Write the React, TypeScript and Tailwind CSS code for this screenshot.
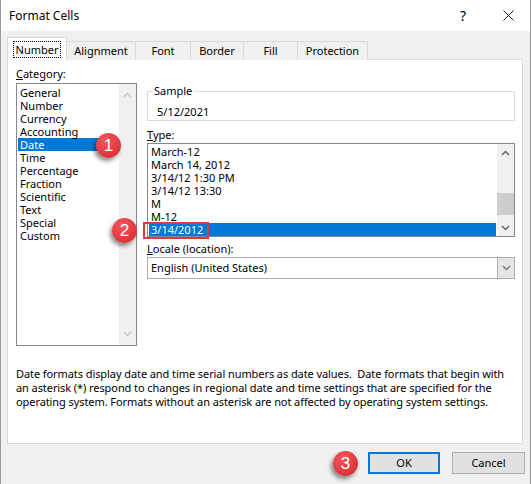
import React from "react";

const font = { fontFamily: '"Segoe UI", "Noto Sans", "Liberation Sans", sans-serif' };

function Chevron({ up, color = "#606060" }: { up?: boolean; color?: string }) {
  return (
    <svg width="9" height="6" viewBox="0 0 9 6">
      <path
        d={up ? "M1 5 L4.5 1.5 L8 5" : "M1 1 L4.5 4.5 L8 1"}
        fill="none"
        stroke={color}
        strokeWidth="1.4"
      />
    </svg>
  );
}

function Badge({ n, className }: { n: string; className: string }) {
  return (
    <div
      className={
        "absolute w-[25px] h-[25px] rounded-full flex items-center justify-center text-white text-[17px] leading-none bg-[radial-gradient(circle_at_40%_30%,#f0575c,#d8262c)] shadow-[-2px_3px_4px_rgba(0,0,0,0.45)] " +
        className
      }
      style={{ fontFamily: '"Liberation Sans", Arial, sans-serif' }}
    >
      {n}
    </div>
  );
}

const categories = [
  "General",
  "Number",
  "Currency",
  "Accounting",
  "Date",
  "Time",
  "Percentage",
  "Fraction",
  "Scientific",
  "Text",
  "Special",
  "Custom",
];

const types = [
  "March-12",
  "March 14, 2012",
  "3/14/12 1:30 PM",
  "3/14/12 13:30",
  "M",
  "M-12",
  "3/14/2012",
];

export default function App() {
  return (
    <div
      className="relative w-[531px] h-[484px] bg-[#f0f0f0] border-l border-r border-[#9a9a9a] text-[11px] text-black overflow-hidden"
      style={font}
    >
      {/* Title bar */}
      <div className="h-[31px] bg-white flex items-center pl-[8px]">
        <span className="text-[12px]">Format Cells</span>
        <span className="ml-auto mr-[37px] text-[14px] leading-none">?</span>
        <svg width="11" height="11" viewBox="0 0 11 11" className="mr-[16px]">
          <path d="M0.5 0.5 L10.5 10.5 M10.5 0.5 L0.5 10.5" stroke="#222" strokeWidth="1" />
        </svg>
      </div>

      {/* Tabs */}
      <div className="mt-[7px] pl-[6px] flex items-end h-[22px] relative z-10">
        <div className="h-[23px] w-[60px] bg-white border border-b-0 border-[#d9d9d9] flex items-center justify-center">
          <span className="border border-dotted border-black px-[2px] leading-[13px] py-[1px]">Number</span>
        </div>
        {[
          ["Alignment", 69],
          ["Font", 55],
          ["Border", 53],
          ["Fill", 54],
          ["Protection", 70],
        ].map(([t, w]) => (
          <div
            key={t as string}
            className="h-[19px] bg-[#f0f0f0] border border-l-0 border-b-0 border-[#d9d9d9] flex items-center justify-center pt-[1px]"
            style={{ width: w as number }}
          >
            {t}
          </div>
        ))}
      </div>

      {/* Panel */}
      <div className="ml-[6px] -mt-px w-[516px] h-[385px] bg-white border border-[#d9d9d9] pl-[8px]">
        <div className="flex">
          {/* Left column */}
          <div className="w-[121px] pt-[7px]">
            <div className="leading-[13px]">
              <span className="underline">C</span>ategory:
            </div>
            <div className="mt-[3px] h-[263px] border border-[#828790] flex">
              <div className="flex-1 pt-[2px] px-[1px]">
                {categories.map((c) => (
                  <div
                    key={c}
                    className={
                      "h-[13px] leading-[13px] pl-[2px] " +
                      (c === "Date" ? "bg-[#0078d7] text-white" : "")
                    }
                  >
                    {c}
                  </div>
                ))}
              </div>
              <div className="w-[17px] bg-[#f0f0f0] flex flex-col items-center justify-between py-[8px]">
                <Chevron up color="#c4c4c4" />
                <Chevron color="#c4c4c4" />
              </div>
            </div>
          </div>

          {/* Right column */}
          <div className="ml-[10px] w-[368px] pt-[31px]">
            <div className="relative h-[30px] border border-[#dcdcdc] pl-[9px] pt-[13px] leading-[13px]">
              <span className="absolute left-[4px] -top-[8px] bg-white px-[2px] leading-[13px]">Sample</span>
              5/12/2021
            </div>
            <div className="mt-[7px] leading-[13px]">
              <span className="underline">T</span>ype:
            </div>
            <div className="mt-[2px] h-[94px] border border-[#828790] flex">
              <div className="flex-1 pt-[1px] px-[1px]">
                {types.map((t, i) => (
                  <div
                    key={t}
                    className={
                      "h-[13px] leading-[13px] pl-[2px] " +
                      (i === types.length - 1 ? "bg-[#0078d7] text-white" : "")
                    }
                  >
                    {t}
                  </div>
                ))}
              </div>
              <div className="w-[17px] bg-[#f0f0f0] flex flex-col items-center">
                <div className="h-[17px] flex items-center justify-center">
                  <Chevron up />
                </div>
                <div className="flex-1 flex flex-col justify-end w-full pb-[3px]">
                  <div className="h-[22px] w-full bg-[#cdcdcd] mb-[1px]" />
                </div>
                <div className="h-[17px] flex items-center justify-center">
                  <Chevron />
                </div>
              </div>
            </div>
            <div className="mt-[5px] leading-[13px]">
              <span className="underline">L</span>ocale (location):
            </div>
            <div className="mt-[2px] h-[22px] border border-[#adadad] flex items-center">
              <span className="pl-[3px] flex-1">English (United States)</span>
              <div className="w-[17px] h-full bg-[#e5e5e5] border-l border-[#adadad] flex items-center justify-center">
                <Chevron color="#7a7a7a" />
              </div>
            </div>
          </div>
        </div>

        <div className="mt-[21px] leading-[14px] whitespace-nowrap tracking-[-0.08px]">
          Date formats display date and time serial numbers as date values.&nbsp; Date formats that begin with
          <br />
          an asterisk (*) respond to changes in regional date and time settings that are specified for the
          <br />
          operating system. Formats without an asterisk are not affected by operating system settings.
        </div>
      </div>

      {/* Buttons */}
      <div className="mt-[8px] flex justify-end pr-[5px] gap-[12px]">
        <button className="w-[72px] h-[22px] bg-[#e1e1e1] border-2 border-[#0078d7] text-[11px]" style={font}>
          OK
        </button>
        <button className="w-[73px] h-[22px] bg-[#e1e1e1] border border-[#adadad] text-[11px]" style={font}>
          Cancel
        </button>
      </div>

      {/* Annotations */}
      <div className="absolute left-[142px] top-[222px] w-[66px] h-[17px] border-2 border-[#e0383e]" />
      <Badge n="1" className="left-[95px] top-[133px]" />
      <Badge n="2" className="left-[111px] top-[218px]" />
      <Badge n="3" className="left-[332px] top-[451px]" />
    </div>
  );
}
